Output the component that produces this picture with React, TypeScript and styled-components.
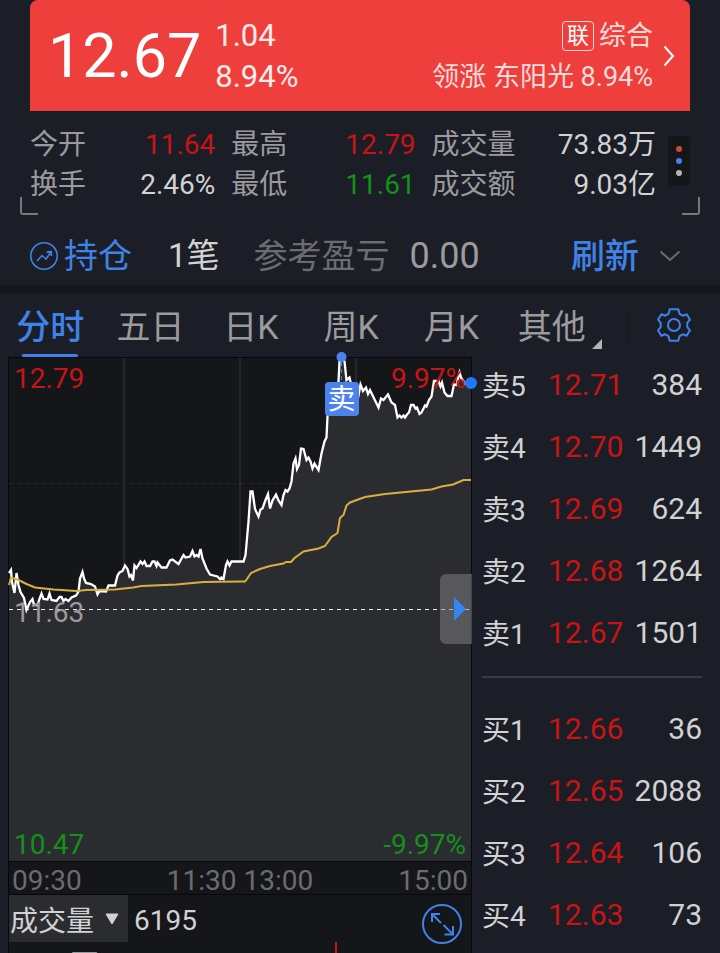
import React, { useState } from "react";
import styled, { createGlobalStyle } from "styled-components";

const color = {
  page: "#1b1e27",
  dark: "#15161a",
  area: "#2b2c30",
  line: "#07080b",
  banner: "#ef3f3d",
  up: "#c81414",
  down: "#15901a",
  blue: "#3f82e8",
  text: "#d2d2d2",
  label: "#9b9b9d",
  dim: "#6b6c70",
};

const tones = {
  up: color.up,
  down: color.down,
  text: color.text,
  label: color.label,
  dim: color.dim,
};
type Tone = keyof typeof tones;

const GlobalStyle = createGlobalStyle`
  * { box-sizing: border-box; }
  body {
    margin: 0;
    background: ${color.page};
    color: ${color.text};
    font-family: Roboto, "Noto Sans CJK SC", sans-serif;
    font-size: 28px;
  }
  button, select {
    margin: 0;
    padding: 0;
    border: 0;
    background: none;
    color: inherit;
    font: inherit;
    cursor: pointer;
  }
`;

const Page = styled.div`
  display: flex;
  flex-direction: column;
  height: 100vh;
  overflow: hidden;
`;

/* ---------- quote banner ---------- */

const Banner = styled.header`
  flex: none;
  display: flex;
  align-items: center;
  height: 111px;
  margin: 0 30px;
  padding: 0 15px 0 18px;
  border-radius: 8px 8px 0 0;
  background: ${color.banner};
  color: #fff;
`;

const LastPrice = styled.strong`
  font-size: 61px;
  font-weight: 400;
  line-height: 76px;
`;

const Change = styled.div`
  display: grid;
  margin-left: 14px;
  font-size: 31px;
  line-height: 41px;
  color: #ffeceb;
`;

const Sector = styled.a`
  display: flex;
  align-items: center;
  gap: 10px;
  margin-left: auto;
  color: #ffdcda;
  font-size: 27px;
  line-height: 41px;
  text-decoration: none;
`;

const SectorText = styled.div`
  display: grid;
  justify-items: end;
  padding-top: 2px;
`;

const SectorName = styled.div`
  display: flex;
  align-items: center;
  gap: 5px;
`;

const LinkBadge = styled.span`
  width: 32px;
  height: 30px;
  border: 1px solid #ffdcda;
  border-radius: 4px;
  color: #fff;
  font-size: 22px;
  line-height: 28px;
  text-align: center;
`;

/* ---------- statistics ---------- */

const StatsPanel = styled.section`
  flex: none;
  display: flex;
  align-items: flex-start;
  gap: 12px;
  height: 104px;
  margin: 0 20px;
  padding: 14px 10px 0;
  position: relative;
`;

const Stats = styled.dl`
  flex: 1;
  display: grid;
  grid-template-columns: 185fr 184fr 224fr;
  column-gap: 16px;
  margin: 0;
  line-height: 40px;
`;

const Stat = styled.div`
  display: flex;
  justify-content: space-between;
`;

const StatName = styled.dt`
  color: ${color.label};
`;

const StatValue = styled.dd<{ $tone: Tone }>`
  margin: 0;
  color: ${(p) => tones[p.$tone]};
`;

const DotsButton = styled.button`
  display: grid;
  place-content: center;
  gap: 6px;
  width: 22px;
  height: 50px;
  margin-top: 11px;
  border-radius: 4px;
  background: ${color.dark};
`;

const Dot = styled.i<{ $color: string }>`
  width: 6px;
  height: 6px;
  border-radius: 50%;
  background: ${(p) => p.$color};
`;

const Corner = styled.i<{ $side: "left" | "right" }>`
  position: absolute;
  bottom: 0;
  ${(p) => p.$side}: 0;
  width: 18px;
  height: 18px;
  border: solid #77787b;
  border-width: ${(p) => (p.$side === "left" ? "0 0 2px 2px" : "0 2px 2px 0")};
  border-radius: ${(p) => (p.$side === "left" ? "0 0 0 3px" : "0 0 3px 0")};
`;

/* ---------- holdings ---------- */

const Holdings = styled.section`
  flex: none;
  display: flex;
  align-items: center;
  height: 78px;
  padding: 12px 39px 0 29px;
  border-bottom: 8px solid ${color.dark};
  font-size: 34px;
  line-height: 40px;
`;

const HoldingTitle = styled.div`
  display: flex;
  align-items: center;
  gap: 5px;
  color: ${color.blue};
`;

const HoldingCount = styled.span`
  margin-left: 36px;
  font-size: 33px;
`;

const ProfitName = styled.span`
  margin-left: 34px;
  color: ${color.dim};
`;

const Profit = styled.span`
  margin-left: 20px;
  font-size: 36px;
  color: ${color.label};
`;

const RefreshButton = styled.button`
  margin-left: auto;
  color: ${color.blue};
  font-weight: 500;
`;

const IconButton = styled.button`
  display: grid;
  place-items: center;
  color: ${color.blue};
`;

const ExpandHoldings = styled(IconButton)`
  margin-left: 20px;
  color: ${color.dim};
`;

/* ---------- tabs ---------- */

const TabBar = styled.nav`
  flex: none;
  display: flex;
  align-items: center;
  height: 64px;
  padding-right: 29px;
`;

const TabList = styled.div`
  flex: 1;
  display: grid;
  grid-template-columns: repeat(6, 1fr);
  height: 100%;
`;

const Tab = styled.button<{ $active: boolean }>`
  position: relative;
  padding-bottom: 2px;
  color: ${(p) => (p.$active ? color.blue : color.label)};
  font-size: 34px;
  font-weight: ${(p) => (p.$active ? 500 : 400)};

  &::after {
    content: "";
    display: ${(p) => (p.$active ? "block" : "none")};
    position: absolute;
    left: 22%;
    right: 22%;
    bottom: 0;
    height: 3px;
    border-radius: 2px;
    background: ${color.blue};
  }
`;

const MoreMark = styled.svg`
  position: absolute;
  right: 0;
  bottom: 8px;
`;

const TabDivider = styled.i`
  width: 1px;
  height: 30px;
  margin: 0 29px 0 25px;
  background: #15171d;
`;

/* ---------- chart and order book ---------- */

const Market = styled.main`
  flex: 1;
  display: flex;
  min-height: 0;
  padding-left: 8px;
`;

const ChartColumn = styled.section`
  flex: 1;
  display: flex;
  flex-direction: column;
  min-width: 0;
  border: solid ${color.line};
  border-width: 0 1px;
  background: ${color.dark};
`;

const Plot = styled.div`
  flex: none;
  position: relative;
  height: 505px;
  border: solid ${color.line};
  border-width: 1px 0;
`;

const PlotDrawing = styled.svg`
  display: block;
  width: 100%;
  height: 100%;
  overflow: visible;
`;

const PlotLabel = styled.span<{ $tone: Tone; $v: "top" | "middle" | "bottom"; $right?: boolean }>`
  position: absolute;
  ${(p) => (p.$right ? "right: 5px;" : "left: 5px;")}
  ${(p) => ({ top: "top: 5px;", middle: "top: 239px;", bottom: "bottom: 0;" })[p.$v]}
  color: ${(p) => tones[p.$tone]};
  line-height: 32px;
`;

const SellFlag = styled.span`
  position: absolute;
  top: 24px;
  left: 72%;
  width: 34px;
  height: 34px;
  transform: translateX(-50%);
  border-radius: 4px;
  background: #4b82ee;
  color: #fff;
  line-height: 36px;
  text-align: center;
`;

const DrawerButton = styled.button`
  position: absolute;
  right: -1px;
  top: 216px;
  display: grid;
  align-items: center;
  justify-content: end;
  width: 32px;
  height: 70px;
  padding-right: 6px;
  border-radius: 6px 0 0 6px;
  background: rgba(132, 130, 136, 0.5);
`;

const TimeAxis = styled.div`
  flex: none;
  display: grid;
  grid-template-columns: 1fr auto 1fr;
  height: 33px;
  padding: 0 3px;
  border-bottom: 1px solid ${color.line};
  color: ${color.dim};
  line-height: 38px;
`;

const Time = styled.span<{ $end?: boolean }>`
  text-align: ${(p) => (p.$end ? "right" : "left")};
`;

const VolumeBar = styled.div`
  flex: none;
  display: flex;
  align-items: center;
  height: 47px;
  padding-right: 9px;
`;

const IndicatorPicker = styled.label`
  display: flex;
  align-items: center;
  gap: 10px;
  height: 47px;
  padding: 0 9px 0 1px;
  background: ${color.area};
`;

const IndicatorSelect = styled.select`
  appearance: none;
  width: 85px;
  height: 47px;
  padding-top: 5px;
  outline: none;
`;

const VolumeValue = styled.output`
  margin-left: 6px;
  padding-top: 3px;
`;

const FullscreenButton = styled(IconButton)`
  margin: 11px 0 0 auto;
`;

const VolumePlot = styled.div`
  flex: 1;
  display: flex;
  min-height: 0;
  padding-left: 7px;
  overflow: hidden;
  color: ${color.label};
  line-height: 46px;
`;

const VolumeSpike = styled.i`
  width: 2px;
  height: 100%;
  margin-left: 52%;
  background: ${color.up};
`;

const Book = styled.table`
  flex: none;
  align-self: flex-start;
  width: 35%;
  max-width: 248px;
  border-collapse: collapse;
  font-size: 30px;
`;

const BookRow = styled.tr`
  height: 62px;
`;

const BookName = styled.th`
  width: 76px;
  padding: 0 0 9px 10px;
  font-size: 28px;
  font-weight: 400;
  text-align: left;
`;

const BookPrice = styled.td`
  padding: 0 0 8px;
  color: ${color.up};
`;

const BookCount = styled.td`
  padding: 0 18px 8px 0;
  text-align: right;
`;

const BookGap = styled.td`
  height: 34px;
  padding: 0 18px 23px 10px;
  vertical-align: top;
`;

const BookRule = styled.hr`
  height: 2px;
  margin: 9px 0 0;
  border: 0;
  background: #373a47;
`;

/* ---------- data ---------- */

const stats: { name: string; value: string; tone: Tone }[] = [
  { name: "今开", value: "11.64", tone: "up" },
  { name: "最高", value: "12.79", tone: "up" },
  { name: "成交量", value: "73.83万", tone: "text" },
  { name: "换手", value: "2.46%", tone: "text" },
  { name: "最低", value: "11.61", tone: "down" },
  { name: "成交额", value: "9.03亿", tone: "text" },
];

const tabNames = ["分时", "五日", "日K", "周K", "月K", "其他"];

type Level = [name: string, price: string, count: number];
const asks: Level[] = [
  ["卖5", "12.71", 384],
  ["卖4", "12.70", 1449],
  ["卖3", "12.69", 624],
  ["卖2", "12.68", 1264],
  ["卖1", "12.67", 1501],
];
const bids: Level[] = [
  ["买1", "12.66", 36],
  ["买2", "12.65", 2088],
  ["买3", "12.64", 106],
  ["买4", "12.63", 73],
];

const priceLine =
  "9,573 11,570 12,582 14.5,593 16.5,573 18.5,585 20.5,592 24,598 26.5,610 30,602 32.5,599 34,605 37.5,605 39.5,599 41.5,593.5 43.5,599 47.5,599.5 49.5,593.5 51.5,600 56.5,601 59.5,597 61.5,597 63.5,601 65.5,599 68.5,601 71.5,597.5 76,595.5 78.5,591.5 80,578.5 82.5,572 84,578.5 86,583 91,584 95,586.5 97.5,594.5 99.5,591 106,591.5 108.5,585.5 115,585.5 117.5,575.5 119.5,572.5 122.5,571 125,565.5 127.5,569 129.5,576.5 131,575 133,580.5 134.5,565.5 136.5,568 140.5,561.5 142.5,564 144.5,561.5 146.5,566 150,566 152.5,561.5 154.5,561.5 156.5,566 157.5,562.5 161.5,567.5 166.5,567.5 170,560.5 172.5,559.5 178.5,564 183.5,555 185.5,557.5 190,556.5 192.5,551 194.5,556.5 196.5,555 198.5,556.5 200.5,549 202.5,558.5 206.5,568.5 210,574.5 217.5,576.5 220,579 221.5,577.5 223.5,579 226,565 227.5,561.5 229.5,565.5 231.5,561.5 235,561.5 243.5,561.5 245.5,555 248.5,521.5 250.5,491.5 252.5,491.5 255,509 258.5,516.5 260.5,509.5 262.5,508.5 265.5,500 268,494 270,508.5 272.5,500.5 276,494.5 278.5,500.5 281.5,505 283.5,495 285.5,490 287.5,491.5 289.5,488.5 291.5,481.5 293.5,463.5 295.5,458.5 297,469 299,465 301,448.5 303.5,449 306.5,460 308.5,457.5 310.5,461.5 312.5,468.5 314.5,463.5 318.5,470 321.5,453.5 324.5,441.5 326.5,437.5 327.5,416.5 330,400 338.5,381.5 339.5,361.5 341.5,357 344.5,361.5 346.5,380 349.5,377.5 352,388 358.5,395.5 360.5,384.5 363,391 366,387.5 368,394 370,390 378.5,407.5 381,398.5 383.5,400 388,394.5 391.5,402.5 395,405 397.5,417.5 399.5,415.5 401.5,417.5 403.5,415.5 405,417.5 407,414.5 409,412.5 411,405 413.5,405 415.5,408.5 417,407.5 419.5,414 421.5,412.5 425,405.5 426.5,406.5 429,400 431.5,396.5 434,381 438.5,381 440.5,386.5 442,382.5 444.5,392.5 447.5,396 451.5,396 454,384.5 456.5,385 459.5,372.5 461.5,378.5 465,383.5 471,383.5";

const averageLine =
  "9,585 11,577.5 18.5,580 26.5,584 35,587.5 53.5,589.5 76.5,591 86.5,590 115,589.5 133,587.5 141.5,586 176.5,584.5 203.5,582 240,581.5 245,581.5 247,579 251,573 260,569 270,566 283.5,563.5 286,562 291,562 294.5,558 298,555.5 303.5,551.5 318.5,548.5 325,546 331.5,537 337.5,533 340,518 343.5,515 346.5,505.5 350,502.5 365,497 385,494 431.5,489.5 441.5,486.5 453,484.5 463.5,480 471,480";

/* ---------- drawings ---------- */

const TrendIcon = () => (
  <svg width="30" height="30" viewBox="0 0 30 30" fill="none" stroke="currentColor" strokeWidth="1.6">
    <circle cx="15" cy="15" r="13.2" />
    <path d="M8 20l5-5.5 4 3.5 5-7M17.5 11.200l4.700-.7.3 4.500" />
  </svg>
);

const GearIcon = () => (
  <svg width="34" height="34" viewBox="0 0 34 34" fill="none" stroke="currentColor" strokeWidth="2" strokeLinejoin="round">
    <path d="M12.700 1.200h8.600l1.200 4.600 3.300 1.900 3.900-1.500 3.300 5.500-2.700 3.200v4.200l2.700 3.200-3.300 5.500-3.900-1.500-3.300 1.900-1.200 4.600h-8.600l-1.200-4.600-3.300-1.900-3.900 1.500L1 22.300l2.700-3.200v-4.200L1 11.700l3.300-5.500 3.900 1.500 3.300-1.900z" />
    <circle cx="17" cy="17" r="6" />
  </svg>
);

const FullscreenIcon = () => (
  <svg width="40" height="40" viewBox="0 0 40 40" fill="none" stroke="currentColor" strokeWidth="2">
    <circle cx="20" cy="20" r="19" />
    <path d="M10 18v-8h8M10 10l9 9M31 22v8.500h-8.500M31 30.500L21.500 21" />
  </svg>
);

const IntradayDrawing = () => (
  <PlotDrawing viewBox="9 358 462 503" preserveAspectRatio="none" aria-hidden="true">
    <g stroke="#26272c" strokeWidth="2">
      <path d="M124 358V861M240 358V861M356 358V861" />
      <path d="M9 483.500H471" strokeWidth="1" strokeDasharray="4 4" />
    </g>
    <polygon points={`9,861 ${priceLine} 471,861`} fill={color.area} />
    <path d="M9 609.500H471" stroke="#f2f2f2" strokeWidth="1" strokeDasharray="4 4" />
    <polyline points={priceLine} fill="none" stroke="#fff" strokeWidth="2.300" />
    <polyline points={averageLine} fill="none" stroke="#d9b040" strokeWidth="2" />
    <path d="M341.500 362V382" stroke={color.blue} strokeDasharray="4 3" />
    <circle cx="341.500" cy="357" r="5" fill="#4b82ee" />
    <circle cx="471" cy="383" r="6" fill="#1f78f5" />
  </PlotDrawing>
);

const Levels = ({ levels }: { levels: Level[] }) => (
  <tbody>
    {levels.map(([name, price, count]) => (
      <BookRow key={name}>
        <BookName scope="row">{name}</BookName>
        <BookPrice>{price}</BookPrice>
        <BookCount>{count}</BookCount>
      </BookRow>
    ))}
  </tbody>
);

export default function App() {
  const [tab, setTab] = useState("分时");

  return (
    <Page>
      <GlobalStyle />
      <Banner>
        <LastPrice>12.67</LastPrice>
        <Change>
          <span>1.04</span>
          <span>8.94%</span>
        </Change>
        <Sector href="#sector">
          <SectorText>
            <SectorName>
              <LinkBadge>联</LinkBadge>
              <span>综合</span>
            </SectorName>
            <span>领涨 东阳光 8.94%</span>
          </SectorText>
          <svg width="12" height="22" viewBox="0 0 12 22" fill="none" stroke="#fff" strokeWidth="2">
            <path d="M1.500 1.500L10 11l-8.500 9.500" />
          </svg>
        </Sector>
      </Banner>

      <StatsPanel>
        <Stats>
          {stats.map((s) => (
            <Stat key={s.name}>
              <StatName>{s.name}</StatName>
              <StatValue $tone={s.tone}>{s.value}</StatValue>
            </Stat>
          ))}
        </Stats>
        <DotsButton aria-label="更多指标">
          <Dot $color="#c94b3d" />
          <Dot $color={color.blue} />
          <Dot $color="#b4b4b6" />
        </DotsButton>
        <Corner $side="left" />
        <Corner $side="right" />
      </StatsPanel>

      <Holdings>
        <HoldingTitle>
          <TrendIcon />
          持仓
        </HoldingTitle>
        <HoldingCount>1笔</HoldingCount>
        <ProfitName>参考盈亏</ProfitName>
        <Profit>0.00</Profit>
        <RefreshButton>刷新</RefreshButton>
        <ExpandHoldings aria-label="展开持仓">
          <svg width="22" height="12" viewBox="0 0 22 12" fill="none" stroke="currentColor" strokeWidth="2">
            <path d="M1.500 1.500L11 10l9.500-8.500" />
          </svg>
        </ExpandHoldings>
      </Holdings>

      <TabBar>
        <TabList>
          {tabNames.map((name) => (
            <Tab key={name} $active={name === tab} onClick={() => setTab(name)}>
              {name}
              {name === "其他" && (
                <MoreMark width="10" height="10" viewBox="0 0 10 10">
                  <path d="M10 0V10H0z" fill="#b4b4b6" />
                </MoreMark>
              )}
            </Tab>
          ))}
        </TabList>
        <TabDivider />
        <IconButton aria-label="设置">
          <GearIcon />
        </IconButton>
      </TabBar>

      <Market>
        <ChartColumn>
          <Plot>
            <PlotLabel $tone="up" $v="top">12.79</PlotLabel>
            <PlotLabel $tone="up" $v="top" $right>9.97%</PlotLabel>
            <IntradayDrawing />
            <PlotLabel $tone="label" $v="middle">11.63</PlotLabel>
            <PlotLabel $tone="down" $v="bottom">10.47</PlotLabel>
            <PlotLabel $tone="down" $v="bottom" $right>-9.97%</PlotLabel>
            <SellFlag>卖</SellFlag>
            <DrawerButton aria-label="收起盘口">
              <svg width="12" height="24" viewBox="0 0 12 24">
                <path d="M0 0L12 12 0 24z" fill="#3585f5" />
              </svg>
            </DrawerButton>
          </Plot>
          <TimeAxis>
            <Time>09:30</Time>
            <Time>11:30 13:00</Time>
            <Time $end>15:00</Time>
          </TimeAxis>
          <VolumeBar>
            <IndicatorPicker>
              <IndicatorSelect aria-label="指标" defaultValue="成交量">
                <option>成交量</option>
                <option>成交额</option>
              </IndicatorSelect>
              <svg width="14" height="12" viewBox="0 0 14 12">
                <path d="M1 1H13L7 11z" fill={color.text} stroke={color.text} strokeLinejoin="round" />
              </svg>
            </IndicatorPicker>
            <VolumeValue>6195</VolumeValue>
            <FullscreenButton aria-label="全屏">
              <FullscreenIcon />
            </FullscreenButton>
          </VolumeBar>
          <VolumePlot>
            <span>4.22万</span>
            <VolumeSpike />
          </VolumePlot>
        </ChartColumn>

        <Book>
          <Levels levels={asks} />
          <tbody>
            <tr>
              <BookGap colSpan={3}>
                <BookRule />
              </BookGap>
            </tr>
          </tbody>
          <Levels levels={bids} />
        </Book>
      </Market>
    </Page>
  );
}
